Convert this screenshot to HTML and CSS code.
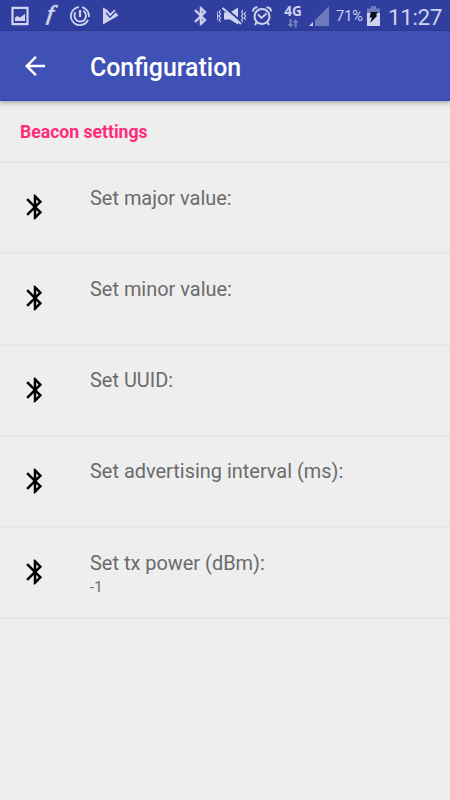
FILE: index.html
```html
<!DOCTYPE html>
<html lang="en">
  <head>
    <meta charset="UTF-8" />
    <meta name="viewport" content="width=device-width, initial-scale=1.0" />
    <title>Configuration</title>
    <link rel="stylesheet" href="styles.css">
  </head>
  <body>
    <!-- shared bluetooth icon -->
    <svg class="defs">
      <symbol id="bluetooth" viewBox="0 0 24 24">
        <path d="M17.71 7.71L12 2h-1v7.59L6.41 5 5 6.41 10.59 12 5 17.59 6.41 19 11 14.41V22h1l5.71-5.71-4.3-4.29 4.3-4.29zM13 5.83l1.88 1.88L13 9.59V5.83zm1.88 10.46L13 18.17v-3.76l1.88 1.88z" />
      </symbol>
    </svg>

    <div class="status-bar">
      <div class="notifications">
        <svg class="picture" width="18" height="20" viewBox="0 0 18 20">
          <path d="M1.5 1.8h15v16.400h-15z" fill="none" stroke="currentColor" stroke-width="2.200" />
          <path d="M4 15v-3.500l2.500-1.500 2.500 1.500 5-3.500v7z" />
        </svg>
        <span class="f-icon">f</span>
        <svg class="swirl" width="20" height="20" viewBox="0 0 20 20" fill="none" stroke="currentColor">
          <path d="M12 1.200A9 9 0 0 1 18.900 11M18 14A9 9 0 1 1 9 1.100" stroke-width="1.800" />
          <path d="M13.200 4.800A5.800 5.800 0 1 1 5.500 6.300" stroke-width="1.900" />
          <path d="M10 4v7" stroke-width="2.200" />
        </svg>
        <svg class="play" width="16" height="18" viewBox="0 0 16 18">
          <path d="M0 .5L4.500 3 7 6.500 11.500 4 15.500 8.500 0 17.500z" />
          <path d="M3 5.500l4 4.500 6-6" fill="none" stroke="#303f9f" stroke-width="1.600" />
          <path d="M4 4.500l3 3.500 5-5" fill="none" stroke="currentColor" stroke-width="1.600" />
        </svg>
      </div>
      <div class="system">
        <svg class="bt" width="22" height="24"><use href="#bluetooth" /></svg>
        <svg class="mute" width="30" height="20" viewBox="0 0 30 20">
          <path d="M7 6.500h6l8-5v17l-8-5H7z" />
          <path d="M7.500 1.500l18 15" stroke="#303f9f" stroke-width="2.200" />
          <path d="M5.500 2l18.500 16" stroke="currentColor" stroke-width="2.200" />
          <path d="M3.500 4l-1.500 2 1.500 2-1.500 2 1.500 2-1.500 2 1.500 2M26 4l-1.500 2 1.500 2-1.500 2 1.500 2-1.500 2 1.500 2M.5 6L0 8l1 2-1 2 .5 2M28.500 6l-1 2 1 2-1 2 1 2" fill="none" stroke="currentColor" stroke-width="1.100" />
        </svg>
        <svg class="alarm" width="20" height="20" viewBox="0 0 20 20" fill="none" stroke="currentColor">
          <circle cx="10" cy="10.500" r="7.500" stroke-width="2" />
          <path d="M1 5.500C1 3 3 1.500 5.500 1.300M19 5.500C19 3 17 1.500 14.500 1.300M4.500 16.500L3 19M15.500 16.500L17 19" stroke-width="2" />
          <path d="M6 8.500l3.500 3.500L14.500 7.500" stroke-width="1.800" />
        </svg>
        <div class="network">
          <span>4G</span>
          <svg width="12" height="9" viewBox="0 0 12 9">
            <path d="M2.600 0h2v5H6.500L3.600 8.500.7 5h1.900zM7.600 8.500h2v-5h1.900L8.600 0 5.700 3.500h1.900z" />
          </svg>
        </div>
        <svg class="signal" width="20" height="20" viewBox="0 0 20 20">
          <path d="M20 0v20H6v-6z" opacity=".4" />
          <path d="M4 16v4H0z" />
        </svg>
        <span class="percent">71%</span>
        <svg class="battery" width="13" height="20" viewBox="0 0 13 20">
          <path d="M4 0h5v2.500h4V8H0V2.500h4z" opacity=".4" />
          <path d="M0 7h13v13H0z" />
          <path d="M4 6h6.500L9 9.500h1.500L3 17l2-5.500H2.500z" fill="#090d20" />
        </svg>
        <span class="clock">11:27</span>
      </div>
    </div>

    <header class="app-bar">
      <svg class="icon" viewBox="0 0 24 24">
        <path d="M20 11H7.830l5.590-5.590L12 4l-8 8 8 8 1.410-1.410L7.830 13H20v-2z" />
      </svg>
      <h1>Configuration</h1>
    </header>

    <main>
      <h2>Beacon settings</h2>
      <ul class="settings">
        <li>
          <svg class="icon"><use href="#bluetooth" /></svg>
          <div class="text"><p>Set major value:</p></div>
        </li>
        <li>
          <svg class="icon"><use href="#bluetooth" /></svg>
          <div class="text"><p>Set minor value:</p></div>
        </li>
        <li>
          <svg class="icon"><use href="#bluetooth" /></svg>
          <div class="text"><p>Set UUID:</p></div>
        </li>
        <li>
          <svg class="icon"><use href="#bluetooth" /></svg>
          <div class="text"><p>Set advertising interval (ms):</p></div>
        </li>
        <li>
          <svg class="icon"><use href="#bluetooth" /></svg>
          <div class="text">
            <p>Set tx power (dBm):</p>
            <small>-1</small>
          </div>
        </li>
      </ul>
    </main>
  </body>
</html>
```
FILE: styles.css
```css
* {
  margin: 0;
  padding: 0;
  box-sizing: border-box;
}

body {
  font-family: Roboto, sans-serif;
  background-color: #eeeeee;
  height: 100vh;
  overflow: hidden;
}

svg {
  display: block;
  flex-shrink: 0;
  fill: currentColor;
}

svg[fill="none"] {
  fill: none;
}

.defs {
  display: none;
}

/* status bar */
.status-bar {
  display: flex;
  justify-content: space-between;
  height: 31px;
  padding: 0 8px 0 11px;
  background-color: #303f9f;
  color: #cfd3ee;
}

.notifications,
.system {
  display: flex;
  align-items: center;
  height: 32px;
}

.f-icon {
  width: 20px;
  height: 32px;
  margin-left: 11px;
  font: italic 500 21px/27px "Liberation Serif", serif;
  text-align: center;
  -webkit-text-stroke: 0.8px currentColor;
  transform: scaleX(1.15) skewX(-6deg);
}

.swirl {
  margin-left: 10px;
}

.play {
  margin-left: 13px;
}

.bt {
  stroke: currentColor;
  stroke-width: 0.7;
}

.mute {
  margin-left: 5px;
}

.alarm {
  margin-left: 5px;
}

.network {
  display: flex;
  flex-direction: column;
  align-items: center;
  width: 18px;
  margin-left: 12px;
  font: 700 13.5px/13px "Noto Sans", sans-serif;
}

.network svg {
  margin-top: 1px;
  opacity: 0.45;
}

.signal {
  margin-left: 7px;
}

.percent {
  width: 28px;
  margin-left: 7px;
  font-size: 14.5px;
  line-height: 34px;
  padding-top: 2px;
}

.battery {
  margin-left: 3px;
}

.clock {
  width: 54px;
  margin-left: 8px;
  font-size: 22.5px;
  letter-spacing: -0.4px;
  line-height: 34px;
  padding-top: 2px;
}

/* toolbar */
.app-bar {
  display: flex;
  align-items: center;
  height: 70px;
  padding: 0 20px;
  background-color: #3f51b5;
  border-bottom: 1px solid #3349b8;
  color: #ffffff;
  box-shadow: 0 2px 5px rgba(0, 0, 0, 0.3);
}

.icon {
  width: 30px;
  height: 30px;
  margin-right: 40px;
}

h1 {
  font-size: 24.9px;
  font-weight: 500;
  line-height: 30px;
  padding-top: 4px;
}

/* settings list */
h2 {
  height: 60px;
  padding-left: 20px;
  color: #ff2a7b;
  font-size: 17.6px;
  font-weight: 700;
  line-height: 62px;
}

.settings {
  list-style: none;
}

.settings li {
  display: flex;
  align-items: center;
  height: 91.25px;
  padding: 0 20px 1px;
  border-top: 2px solid #e8e8e8;
  color: #000000;
}

.settings li:last-child {
  height: 93.25px;
  border-bottom: 2px solid #e8e8e8;
}

.text {
  height: 45px;
  color: #6b6b6b;
}

.text p {
  font-size: 19.95px;
  line-height: 27px;
}

.text small {
  display: block;
  font-size: 15px;
  line-height: 21px;
}
```
